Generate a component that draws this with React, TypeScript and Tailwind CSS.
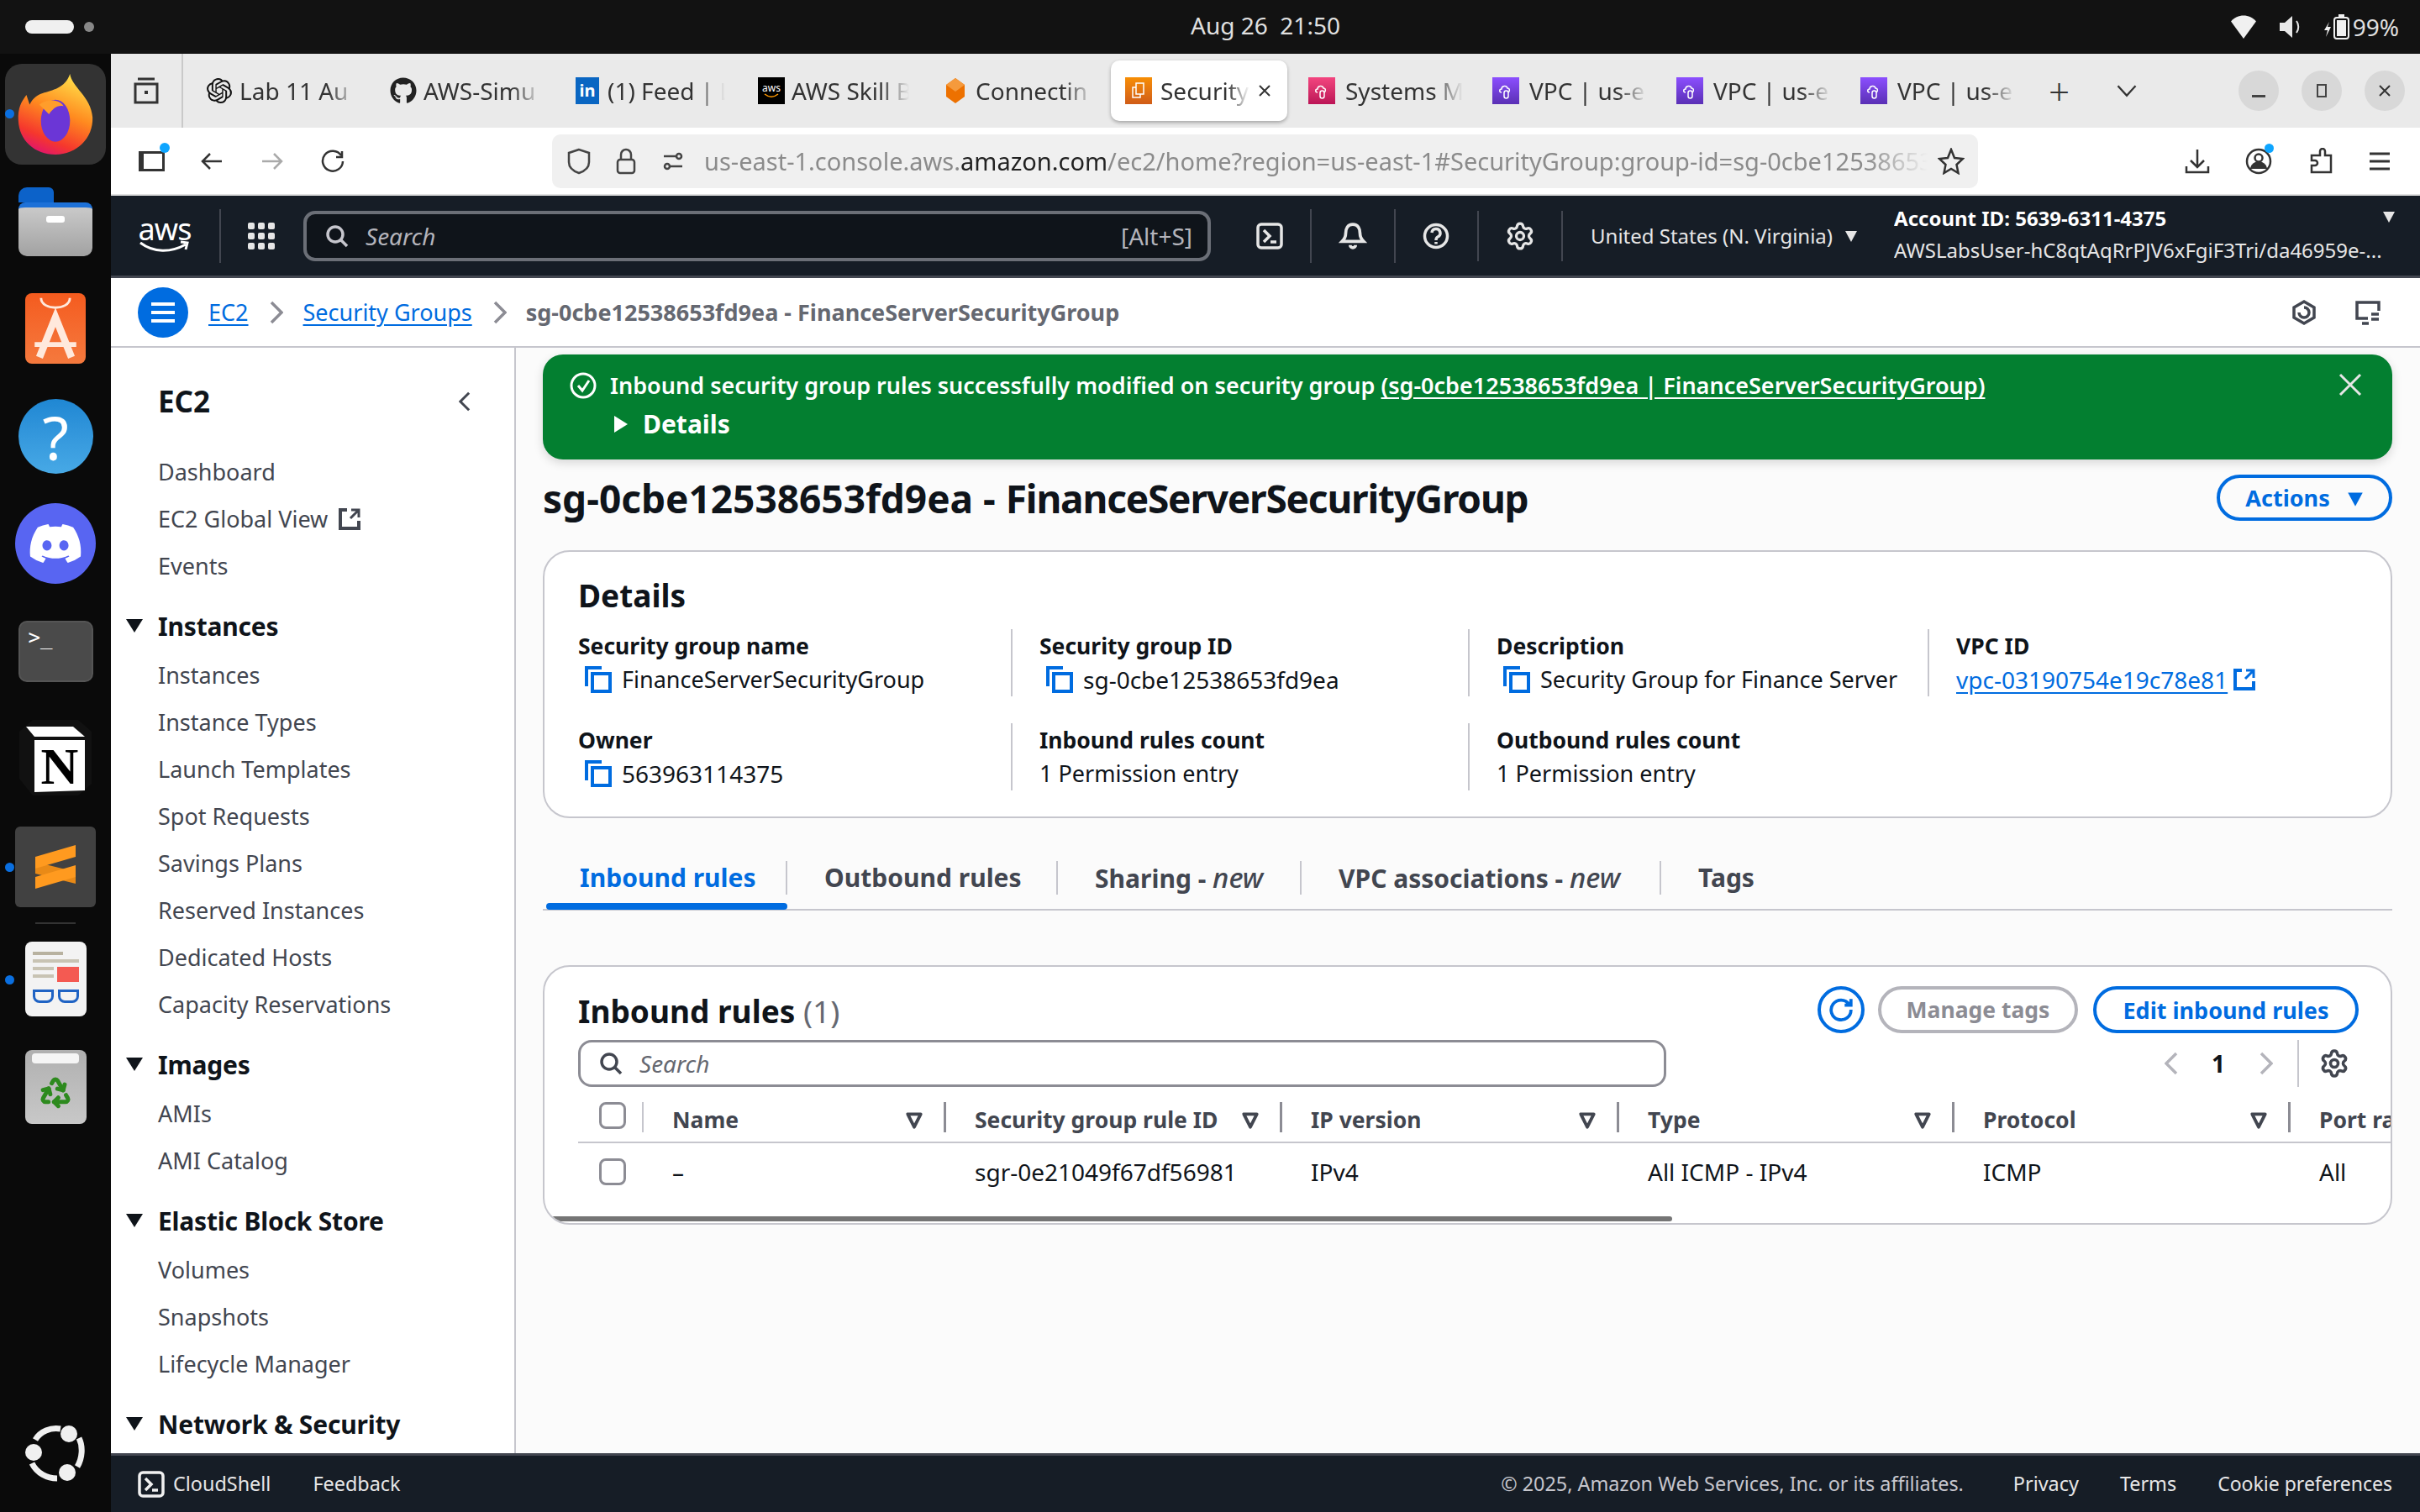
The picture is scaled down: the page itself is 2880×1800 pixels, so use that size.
import { FaDiscord, FaGithub } from "react-icons/fa";
import { SiOpenai } from "react-icons/si";
import { Recycle, Settings } from "lucide-react";

const tabsFade = "overflow-hidden whitespace-nowrap [mask-image:linear-gradient(to_right,black_75%,transparent)]";

const CloudIcon = ({ from }: { from: string }) => (
  <div className={`flex h-[32px] w-[32px] items-center justify-center ${from}`}>
    <svg viewBox="0 0 24 24" className="h-[24px] w-[24px]" fill="none" stroke="white" strokeWidth="1.5">
      <path d="M7 14c-3 0-3-4 0-4 0-4 6-5 7-1 3 0 3 4 1 5" />
      <rect x="10" y="12" width="5" height="9" rx="2.5" />
    </svg>
  </div>
);

const browserTabs = [
  { title: "Lab 11 Au", icon: <SiOpenai className="h-[30px] w-[30px] text-[#111]" /> },
  { title: "AWS-Simu", icon: <FaGithub className="h-[32px] w-[32px] text-[#222]" /> },
  {
    title: "(1) Feed | L",
    icon: (
      <div className="flex h-[32px] w-[28px] items-center justify-center bg-[#0a66c2] text-[20px] font-bold leading-none text-white">
        in
      </div>
    ),
  },
  {
    title: "AWS Skill B",
    icon: (
      <div className="flex h-[32px] w-[32px] flex-col items-center justify-center bg-black text-[12px] leading-none text-white">
        aws
        <svg viewBox="0 0 20 6" className="w-[20px]" fill="none" stroke="#f90" strokeWidth="1.5">
          <path d="M2 1c5 4 11 4 16 0" />
        </svg>
      </div>
    ),
  },
  {
    title: "Connectin",
    icon: (
      <svg viewBox="0 0 32 32" className="h-[32px] w-[32px]">
        <path d="M16 1 27 9v14L16 31 5 23V9z" fill="#ed7100" />
        <path d="M16 1 27 9 16 17 5 9z" fill="#f59a3c" />
      </svg>
    ),
  },
];

const rightTabs = [
  { title: "Systems M", bg: "bg-gradient-to-b from-[#f3457f] to-[#bc1356]" },
  { title: "VPC | us-e", bg: "bg-gradient-to-b from-[#8c4fff] to-[#5a30b5]" },
  { title: "VPC | us-e", bg: "bg-gradient-to-b from-[#8c4fff] to-[#5a30b5]" },
  { title: "VPC | us-e", bg: "bg-gradient-to-b from-[#8c4fff] to-[#5a30b5]" },
];

const navSections = [
  { title: "Instances", items: ["Instances", "Instance Types", "Launch Templates", "Spot Requests", "Savings Plans", "Reserved Instances", "Dedicated Hosts", "Capacity Reservations"] },
  { title: "Images", items: ["AMIs", "AMI Catalog"] },
  { title: "Elastic Block Store", items: ["Volumes", "Snapshots", "Lifecycle Manager"] },
  { title: "Network & Security", items: [] },
];

const columns = [
  { label: "Name", value: "–", width: "w-[360px]" },
  { label: "Security group rule ID", value: "sgr-0e21049f67df56981", width: "w-[400px]" },
  { label: "IP version", value: "IPv4", width: "w-[401px]" },
  { label: "Type", value: "All ICMP - IPv4", width: "w-[399px]" },
  { label: "Protocol", value: "ICMP", width: "w-[400px]" },
  { label: "Port range", value: "All", width: "w-[400px]" },
];

const CopyIcon = () => (
  <svg viewBox="0 0 32 32" className="ml-[8px] mr-[12px] h-[32px] w-[32px] shrink-0" fill="none" stroke="#006ce0" strokeWidth="4">
    <path d="M2 24V2h18" />
    <rect x="9" y="9" width="21" height="21" />
  </svg>
);

const ExternalIcon = ({ color, size }: { color: string; size: string }) => (
  <svg viewBox="0 0 28 28" className={size} fill="none" stroke={color} strokeWidth="4">
    <path d="M11 3H3v22h22v-9" />
    <path d="M15 13 24 4M16 3h9v9" strokeWidth="3" />
  </svg>
);

const Shell = ({ size, color }: { size: string; color: string }) => (
  <svg viewBox="0 0 32 32" className={size} fill="none" stroke={color} strokeWidth="3.5">
    <rect x="2" y="2" width="28" height="28" rx="4" />
    <path d="M9 9l7 7-7 7M17 23h7" />
  </svg>
);

const Caret = ({ color, size }: { color: string; size: string }) => (
  <svg viewBox="0 0 16 16" className={size} fill={color}>
    <path d="M1 2h14L8 15z" />
  </svg>
);

const SortIcon = () => (
  <svg viewBox="0 0 20 20" className="h-[22px] w-[22px]" fill="none" stroke="#424650" strokeWidth="3.5" strokeLinejoin="round">
    <path d="M3 3h14L10 17z" />
  </svg>
);

const Dot = ({ top }: { top: string }) => <div className={`absolute left-[6px] h-[11px] w-[11px] rounded-full bg-[#0a6fe0] ${top}`} />;

function Dock() {
  return (
    <aside className="relative flex w-[132px] shrink-0 flex-col items-center bg-[#0a0a0a]">
      <Dot top="top-[66px]" />
      <Dot top="top-[963px]" />
      <Dot top="top-[1097px]" />
      <div className="mt-[12px] flex h-[120px] w-[120px] items-center justify-center rounded-[20px] bg-[#333]">
        <svg viewBox="0 0 100 100" className="h-[96px] w-[96px]">
          <defs>
            <linearGradient id="ff" x1="0.7" y1="0" x2="0.3" y2="1">
              <stop offset="0" stopColor="#ffe14a" />
              <stop offset="0.45" stopColor="#ff8a1f" />
              <stop offset="0.8" stopColor="#f5372d" />
              <stop offset="1" stopColor="#e0136f" />
            </linearGradient>
          </defs>
          <path d="M68 0c2 16 26 28 28 54 1 26-20 46-46 46S5 82 4 58C3 42 8 34 14 26l4 12c4-8 10-12 16-14 12-4 28-6 34-24z" fill="url(#ff)" />
          <ellipse cx="50" cy="58" rx="18" ry="26" fill="#6b36d6" />
          <path d="M30 38c10-8 26-6 30 2-8-2-14 4-18 10z" fill="#ff9d2b" />
        </svg>
      </div>
      <div className="mt-[27px] flex h-[82px] w-[88px] flex-col overflow-hidden rounded-[10px]">
        <div className="h-[18px] w-[42px] rounded-t-[6px] bg-[#0c62c9]" />
        <div className="flex flex-1 justify-center rounded-[8px] border-t-[6px] border-[#1d71d8] bg-gradient-to-b from-[#c9c9c9] to-[#a2a2a2] pt-[10px]">
          <div className="h-[8px] w-[22px] rounded-[3px] bg-white" />
        </div>
      </div>
      <div className="mt-[44px] flex h-[84px] w-[72px] flex-col items-center rounded-[8px] bg-gradient-to-b from-[#f45b1e] to-[#f5793d] pt-[2px]">
        <svg viewBox="0 0 72 84" className="h-[80px] w-[72px]" fill="none" stroke="#ffe9dc" strokeWidth="9">
          <path d="M18 4c0 16 36 16 36 0" strokeWidth="3" />
          <path d="M16 78 36 28l20 50" />
          <path d="M10 62h52" strokeWidth="6" />
        </svg>
      </div>
      <div className="mt-[42px] flex h-[89px] w-[89px] items-center justify-center rounded-full bg-gradient-to-b from-[#1f87d3] to-[#47a9e6] text-[72px] leading-none text-white [font-family:'Noto_Sans',sans-serif]">
        ?
      </div>
      <div className="mt-[35px] flex h-[96px] w-[96px] items-center justify-center rounded-full bg-[#5865f2]">
        <FaDiscord className="h-[66px] w-[66px] text-white" />
      </div>
      <div className="mt-[44px] h-[73px] w-[89px] rounded-[10px] border-2 border-[#555] bg-[#4a4a4a] pl-[10px] text-[24px] leading-[36px] text-white [font-family:'DejaVu_Sans_Mono',monospace]">
        &gt;_
      </div>
      <svg viewBox="0 0 86 90" className="mt-[45px] h-[90px] w-[86px]">
        <path d="M0 14 16 0h54l16 14v62l-16 14H16L0 70z" fill="#111" />
        <path d="M8 8h56l14 12H18z" fill="#fff" />
        <path d="M18 24h60v60l-60 2z" fill="#fff" />
        <text x="48" y="76" textAnchor="middle" fontSize="62" fontWeight="700" fontFamily="Liberation Serif" fill="#000">
          N
        </text>
      </svg>
      <div className="mt-[37px] flex h-[96px] w-[96px] items-center justify-center rounded-[6px] bg-[#414141]">
        <svg viewBox="0 0 48 52" className="h-[62px] w-[48px]" fill="#ff9a1f">
          <path d="M0 20 48 32v14L0 34z" fill="#e98a17" />
          <path d="M0 14 48 0v14L0 28z" />
          <path d="M0 38l48-14v14L0 52z" />
        </svg>
      </div>
      <div className="mt-[18px] h-[2px] w-[48px] bg-[#333]" />
      <div className="mt-[21px] flex h-[89px] w-[73px] flex-col gap-[5px] rounded-[8px] bg-[#f3f3f3] px-[9px] pt-[12px]">
        <div className="h-[4px] w-[36px] bg-[#b8b2a0]" />
        <div className="h-[4px] w-full bg-[#c8c3b3]" />
        <div className="flex gap-[4px]">
          <div className="flex flex-1 flex-col gap-[5px]">
            <div className="h-[4px] bg-[#c8c3b3]" />
            <div className="h-[4px] bg-[#c8c3b3]" />
          </div>
          <div className="h-[18px] w-[26px] bg-[#f45a52]" />
        </div>
        <div className="mt-[4px] flex justify-between">
          <div className="h-[16px] w-[25px] rounded-b-[8px] border-[3px] border-[#1f63c4]" />
          <div className="h-[16px] w-[25px] rounded-b-[8px] border-[3px] border-[#1f63c4]" />
        </div>
      </div>
      <div className="mt-[40px] flex h-[88px] w-[73px] flex-col items-center rounded-[8px] bg-gradient-to-b from-[#b0b0b0] to-[#c8c8c8] pt-[4px]">
        <div className="h-[12px] w-[56px] rounded-[4px] bg-[#f5f5f5]" />
        <Recycle className="mt-[14px] h-[40px] w-[40px] text-[#2d8a1e]" strokeWidth={3} />
      </div>
      <div className="mt-[358px]">
        <svg viewBox="0 0 72 68" className="h-[68px] w-[72px]" fill="none" stroke="#f0f0f0" strokeWidth="7">
          <path d="M42 5C30 3 18 8 12 18M8 46c6 12 18 18 30 18M62 50c6-10 7-24 2-34" />
          <circle cx="52" cy="11" r="10" fill="#f0f0f0" stroke="none" />
          <circle cx="10" cy="33" r="10" fill="#f0f0f0" stroke="none" />
          <circle cx="50" cy="57" r="10" fill="#f0f0f0" stroke="none" />
        </svg>
      </div>
    </aside>
  );
}

function TabStrip() {
  return (
    <div className="flex h-[88px] shrink-0 items-center bg-[#eaeaea] text-[28px] text-[#333] [font-family:'Noto_Sans',sans-serif]">
      <div className="flex h-full w-[86px] shrink-0 items-center justify-center border-r-2 border-[#c9c9c9]">
        <svg viewBox="0 0 32 32" className="h-[32px] w-[32px]" fill="none" stroke="#333" strokeWidth="3">
          <path d="M6 2h20M3 8h26v22H3z" />
          <rect x="14" y="16" width="4" height="4" fill="#333" stroke="none" />
        </svg>
      </div>
      <div className="ml-[9px] flex h-full items-center">
        {browserTabs.map((tab) => (
          <div key={tab.title} className="flex w-[219px] items-center gap-[8px] pl-[18px]">
            <div className="flex w-[32px] shrink-0 justify-center">{tab.icon}</div>
            <div className={`w-[140px] ${tabsFade}`}>{tab.title}</div>
          </div>
        ))}
        <div className="flex h-[72px] w-[210px] items-center gap-[10px] rounded-[10px] bg-white pl-[17px] shadow-[0_2px_4px_rgba(0,0,0,0.3)]">
          <div className="flex h-[32px] w-[32px] shrink-0 items-center justify-center bg-gradient-to-b from-[#f78e04] to-[#d05c17]">
            <svg viewBox="0 0 24 24" className="h-[24px] w-[24px]" fill="none" stroke="white" strokeWidth="1.5">
              <rect x="9" y="3" width="9" height="13" />
              <path d="M9 8H5v12h9v-4" />
            </svg>
          </div>
          <div className={`w-[106px] ${tabsFade}`}>Security</div>
          <svg viewBox="0 0 16 16" className="h-[16px] w-[16px]" fill="none" stroke="#333" strokeWidth="2">
            <path d="m2 2 12 12M14 2 2 14" />
          </svg>
        </div>
        <div className="w-[9px]" />
        {rightTabs.map((tab, i) => (
          <div key={i} className="flex w-[219px] items-center gap-[12px] pl-[16px]">
            <CloudIcon from={tab.bg} />
            <div className={`w-[140px] ${tabsFade}`}>{tab.title}</div>
          </div>
        ))}
      </div>
      <span className="ml-[21px] text-[44px] font-light leading-none">+</span>
      <svg viewBox="0 0 24 24" className="ml-[54px] h-[28px] w-[28px]" fill="none" stroke="#333" strokeWidth="2">
        <path d="M3 7l9 10 9-10" />
      </svg>
      <div className="ml-[119px] flex items-center gap-[27px]">
        <div className="flex h-[48px] w-[48px] items-center justify-center rounded-full bg-[#d8d8d8]">
          <div className="mt-[12px] h-[3px] w-[16px] bg-[#444]" />
        </div>
        <div className="flex h-[48px] w-[48px] items-center justify-center rounded-full bg-[#d8d8d8]">
          <div className="h-[16px] w-[12px] border-2 border-[#444]" />
        </div>
        <div className="flex h-[48px] w-[48px] items-center justify-center rounded-full bg-[#d8d8d8]">
          <svg viewBox="0 0 16 16" className="h-[16px] w-[16px]" fill="none" stroke="#333" strokeWidth="2">
            <path d="m2 2 12 12M14 2 2 14" />
          </svg>
        </div>
      </div>
    </div>
  );
}

function Toolbar() {
  return (
    <div className="relative flex h-[81px] shrink-0 items-center border-b-2 border-[#e0e0e0] bg-white [font-family:'Noto_Sans',sans-serif]">
      <div className="relative ml-[33px] h-[24px] w-[31px] border-[3px] border-l-[6px] border-[#333]">
        <div className="absolute -right-[9px] -top-[13px] h-[12px] w-[12px] rounded-full bg-[#0ea5ff]" />
      </div>
      <svg viewBox="0 0 28 28" className="ml-[42px] h-[28px] w-[28px]" fill="none" stroke="#333" strokeWidth="2.5">
        <path d="M26 14H3M12 5l-9 9 9 9" />
      </svg>
      <svg viewBox="0 0 28 28" className="ml-[44px] h-[28px] w-[28px]" fill="none" stroke="#aaa" strokeWidth="2.5">
        <path d="M2 14h23M16 5l9 9-9 9" />
      </svg>
      <svg viewBox="0 0 28 28" className="ml-[44px] h-[28px] w-[28px]" fill="none" stroke="#333" strokeWidth="2.5">
        <path d="M24 7a12 12 0 1 0 2 7M25 2v7h-7" />
      </svg>
      <div className="ml-[247px] flex h-[64px] w-[1697px] items-center rounded-[10px] bg-[#f0f0f0] pl-[18px]">
        <svg viewBox="0 0 28 32" className="h-[32px] w-[28px]" fill="none" stroke="#444" strokeWidth="2.5">
          <path d="M14 2 2 6v11c0 7 6 11 12 13 6-2 12-6 12-13V6z" />
        </svg>
        <svg viewBox="0 0 24 32" className="ml-[30px] h-[32px] w-[24px]" fill="none" stroke="#444" strokeWidth="2.5">
          <path d="M6 14V8a6 6 0 0 1 12 0v6" />
          <rect x="2" y="14" width="20" height="16" rx="3" />
        </svg>
        <svg viewBox="0 0 28 28" className="ml-[30px] h-[28px] w-[28px]" fill="none" stroke="#444" strokeWidth="2.5">
          <circle cx="21" cy="8" r="3" />
          <circle cx="7" cy="20" r="3" />
          <path d="M3 8h14M11 20h14" />
        </svg>
        <div className="ml-[23px] w-[1456px] overflow-hidden whitespace-nowrap text-[29px] text-[#8b8b8b] [mask-image:linear-gradient(to_right,black_95%,transparent)]">
          us-east-1.console.aws.<span className="text-[#222]">amazon.com</span>/ec2/home?region=us-east-1#SecurityGroup:group-id=sg-0cbe12538653fd9ea
        </div>
        <svg viewBox="0 0 32 32" className="ml-[12px] h-[32px] w-[32px]" fill="none" stroke="#333" strokeWidth="2.5">
          <path d="m16 2 4 10 10 1-7.500 7 2 10-8.500-5-8.500 5 2-10L2 13l10-1z" />
        </svg>
      </div>
      <svg viewBox="0 0 32 32" className="ml-[245px] h-[32px] w-[32px]" fill="none" stroke="#333" strokeWidth="2.5">
        <path d="M16 2v21M8 15l8 8 8-8M3 22v7h26v-7" />
      </svg>
      <div className="relative ml-[41px] h-[32px] w-[32px]">
        <svg viewBox="0 0 32 32" className="h-[32px] w-[32px]" fill="none" stroke="#333" strokeWidth="2.5">
          <circle cx="16" cy="16" r="14" />
          <circle cx="16" cy="12" r="4.500" />
          <path d="M7 25c1-10 17-10 18 0" fill="#333" />
        </svg>
        <div className="absolute -right-[2px] -top-[5px] h-[11px] w-[11px] rounded-full bg-[#0ea5ff]" />
      </div>
      <svg viewBox="0 0 32 32" className="ml-[41px] h-[32px] w-[32px]" fill="none" stroke="#333" strokeWidth="2.5">
        <path d="M12 9h4V4a3 3 0 0 1 6 0v5h7v20H6v-8h4a3 3 0 0 0 0-6H6V9z" />
      </svg>
      <svg viewBox="0 0 28 28" className="ml-[41px] h-[28px] w-[28px]" fill="none" stroke="#333" strokeWidth="3">
        <path d="M2 5h24M2 14h24M2 23h24" />
      </svg>
    </div>
  );
}

function AwsHeader() {
  return (
    <header className="flex h-[98px] shrink-0 items-center border-b-[3px] border-[#424650] bg-[#161d26] text-white [font-family:'Noto_Sans',sans-serif]">
      <div className="ml-[33px] flex w-[62px] flex-col items-center">
        <span className="text-[36px] leading-[26px] tracking-tight">aws</span>
        <svg viewBox="0 0 62 16" className="h-[16px] w-[62px]" fill="none" stroke="white" strokeWidth="3">
          <path d="M2 3c16 12 36 12 54 2M50 2l8 1-2 8" />
        </svg>
      </div>
      <div className="ml-[34px] h-[64px] w-[2px] bg-[#424650]" />
      <div className="ml-[32px] grid h-[32px] w-[32px] grid-cols-3 gap-[4px]">
        {Array.from({ length: 9 }).map((_, i) => (
          <div key={i} className="rounded-[2px] bg-[#e6e6e6]" />
        ))}
      </div>
      <div className="ml-[34px] flex h-[60px] w-[1080px] items-center rounded-[14px] border-[4px] border-[#6b6f77] bg-[#0f141a] pl-[22px] pr-[18px]">
        <svg viewBox="0 0 28 28" className="h-[28px] w-[28px]" fill="none" stroke="#c6c6cd" strokeWidth="3.500">
          <circle cx="12" cy="12" r="9" />
          <path d="m18 18 8 8" />
        </svg>
        <span className="ml-[20px] text-[28px] italic text-[#b4b4bb]">Search</span>
        <span className="ml-auto text-[28px] text-[#b4b4bb]">[Alt+S]</span>
      </div>
      <div className="ml-[52px] flex h-[64px] w-[36px] items-center justify-center">
        <Shell size="h-[32px] w-[32px]" color="#e6e6e6" />
      </div>
      <div className="ml-[30px] h-[64px] w-[2px] bg-[#424650]" />
      <svg viewBox="0 0 32 32" className="ml-[32px] h-[34px] w-[34px]" fill="none" stroke="#e6e6e6" strokeWidth="3.5">
        <path d="M16 3c-6 0-8 5-8 10 0 5-2 7-4 9h24c-2-2-4-4-4-9 0-5-2-10-8-10zM13 26a3 3 0 0 0 6 0" />
      </svg>
      <div className="ml-[32px] h-[64px] w-[2px] bg-[#424650]" />
      <svg viewBox="0 0 32 32" className="ml-[32px] h-[32px] w-[32px]" fill="none" stroke="#e6e6e6" strokeWidth="3.5">
        <circle cx="16" cy="16" r="13.500" />
        <path d="M11 12a5 5 0 1 1 7 5c-2 1-2 2-2 4M16 23v2.500" />
      </svg>
      <div className="ml-[33px] h-[60px] w-[2px] bg-[#424650]" />
      <Settings className="ml-[31px] h-[36px] w-[36px] text-[#e6e6e6]" strokeWidth={2.2} />
      <div className="ml-[31px] h-[60px] w-[2px] bg-[#424650]" />
      <span className="ml-[33px] text-[24px] text-[#e6e6e6]">United States (N. Virginia)</span>
      <Caret color="#e6e6e6" size="ml-[14px] h-[16px] w-[16px]" />
      <div className="ml-[43px] -mt-[4px] w-[605px] overflow-hidden">
        <div className="relative whitespace-nowrap text-[24px] font-bold leading-[38px]">
          Account ID: 5639-6311-4375
          <Caret color="#e6e6e6" size="absolute right-[8px] top-[9px] h-[16px] w-[16px]" />
        </div>
        <div className="whitespace-nowrap text-[24px] leading-[38px] text-[#e6e6e6]">AWSLabsUser-hC8qtAqRrPJV6xFgiF3Tri/da46959e-...</div>
      </div>
    </header>
  );
}

function Breadcrumbs() {
  const sep = (
    <svg viewBox="0 0 16 28" className="h-[28px] w-[16px]" fill="none" stroke="#8c8c94" strokeWidth="3.5">
      <path d="m2 2 12 12L2 26" />
    </svg>
  );
  return (
    <div className="flex h-[83px] shrink-0 items-center border-b-2 border-[#c6c6cd] bg-white text-[27px] [font-family:'Noto_Sans',sans-serif]">
      <div className="ml-[32px] flex h-[60px] w-[60px] flex-col items-center justify-center gap-[6px] rounded-full bg-[#006ce0]">
        <div className="h-[4px] w-[28px] bg-white" />
        <div className="h-[4px] w-[28px] bg-white" />
        <div className="h-[4px] w-[28px] bg-white" />
      </div>
      <a className="ml-[24px] pt-[2px] text-[#006ce0] underline underline-offset-4">EC2</a>
      <div className="ml-[25px]">{sep}</div>
      <a className="ml-[24px] pt-[2px] text-[#006ce0] underline underline-offset-4">Security Groups</a>
      <div className="ml-[25px]">{sep}</div>
      <span className="ml-[23px] pt-[2px] font-bold text-[#656871]">sg-0cbe12538653fd9ea - FinanceServerSecurityGroup</span>
      <svg viewBox="0 0 32 32" className="ml-auto h-[32px] w-[32px]" fill="none" stroke="#424650" strokeWidth="3.5">
        <path d="M16 3 28 10v12l-12 7-12-7V10z" />
        <path d="M10 16a6 6 0 1 0 6-6" />
      </svg>
      <svg viewBox="0 0 32 32" className="ml-[44px] mr-[46px] h-[32px] w-[32px]" fill="none" stroke="#424650" strokeWidth="3.5">
        <path d="M16 23H3V4h26v10M9 29h8" />
        <path d="M20 18h9M20 24h9" />
      </svg>
    </div>
  );
}

function Sidebar() {
  return (
    <nav className="w-[482px] shrink-0 overflow-hidden border-r-2 border-[#c6c6cd] bg-white pl-[56px] pt-[42px] text-[27px] leading-[40px] text-[#424650]">
      <div className="flex items-center justify-between pr-[52px]">
        <h2 className="text-[35px] font-bold leading-[44px] text-[#0f141a]">EC2</h2>
        <svg viewBox="0 0 16 28" className="h-[24px] w-[14px]" fill="none" stroke="#424650" strokeWidth="3.5">
          <path d="M14 2 2 14l12 12" />
        </svg>
      </div>
      <div className="mt-[42px] flex flex-col gap-[16px]">
        <div>Dashboard</div>
        <div className="flex items-center gap-[12px]">
          EC2 Global View
          <ExternalIcon color="#424650" size="h-[28px] w-[28px]" />
        </div>
        <div>Events</div>
      </div>
      {navSections.map((section) => (
        <div key={section.title} className="mt-[32px]">
          <div className="relative mb-[18px] text-[30px] font-bold tracking-[-0.2px] text-[#0f141a]">
            <svg viewBox="0 0 20 16" className="absolute -left-[38px] top-[11px] h-[16px] w-[20px]" fill="#0f141a">
              <path d="M0 0h20L10 16z" />
            </svg>
            {section.title}
          </div>
          <div className="flex flex-col gap-[16px]">
            {section.items.map((item) => (
              <div key={item}>{item}</div>
            ))}
          </div>
        </div>
      ))}
    </nav>
  );
}

const DetailCell = ({ label, value, digits, copy, link, divider = true }: { label: string; value?: string; digits?: boolean; copy?: boolean; link?: string; divider?: boolean }) => (
  <div className={`h-[80px] pl-[32px] ${divider ? "border-l-2 border-[#c6c6cd]" : ""}`}>
    <div className="text-[26.500px] font-bold leading-[40px] text-[#0f141a]">{label}</div>
    <div className={`flex items-center leading-[40px] text-[#0f141a] ${digits ? "text-[28px]" : "text-[27px]"}`}>
      {copy && <CopyIcon />}
      {value}
      {link && (
        <a className="flex items-center gap-[6px] text-[28px] text-[#006ce0] underline underline-offset-4">
          {link} <ExternalIcon color="#006ce0" size="h-[28px] w-[28px]" />
        </a>
      )}
    </div>
  </div>
);

function DetailsCard() {
  return (
    <section className="mt-[35px] h-[319px] rounded-[32px] border-2 border-[#c6c6cd] bg-white pl-[40px] pt-[28px]">
      <h2 className="text-[37px] font-bold leading-[48px] text-[#0f141a]">Details</h2>
      <div className="mt-[16px] grid grid-cols-[515px_544px_547px_1fr] gap-y-[32px]">
        <div className="-ml-[32px]">
          <DetailCell label="Security group name" value="FinanceServerSecurityGroup" copy divider={false} />
        </div>
        <DetailCell label="Security group ID" value="sg-0cbe12538653fd9ea" digits copy />
        <DetailCell label="Description" value="Security Group for Finance Server" copy />
        <DetailCell label="VPC ID" link="vpc-03190754e19c78e81" />
        <div className="-ml-[32px]">
          <DetailCell label="Owner" value="563963114375" digits copy divider={false} />
        </div>
        <DetailCell label="Inbound rules count" value="1 Permission entry" />
        <DetailCell label="Outbound rules count" value="1 Permission entry" />
      </div>
    </section>
  );
}

function Tabs() {
  const tabs = [
    { label: "Inbound rules", w: "w-[287px]" },
    { label: "Outbound rules", w: "w-[322px]" },
    { label: "Sharing - ", em: "new", w: "w-[290px]" },
    { label: "VPC associations - ", em: "new", w: "w-[428px]" },
    { label: "Tags", w: "w-[120px]" },
  ];
  return (
    <div className="mt-[51px] flex h-[59px] items-start border-b-2 border-[#c6c6cd] pl-[4px] text-[30px] font-bold leading-[40px] text-[#424650]">
      {tabs.map((tab, i) => (
        <div key={tab.label} className={`relative h-[58px] shrink-0 ${tab.w}`}>
          <div className={`h-[40px] whitespace-nowrap ${i === 0 ? "pl-[40px] text-[#006ce0]" : "pl-[44px]"} ${i < 4 ? "border-r-2 border-[#c6c6cd]" : ""}`}>
            {tab.label}
            {tab.em && <em className="text-[33px] font-medium">{tab.em}</em>}
          </div>
          {i === 0 && <div className="absolute bottom-0 left-0 right-0 h-[8px] rounded-[4px] bg-[#006ce0]" />}
        </div>
      ))}
    </div>
  );
}

function RulesCard() {
  return (
    <section className="relative mt-[65px] h-[309px] overflow-hidden rounded-[32px] border-2 border-[#c6c6cd] bg-white pl-[40px]">
      <div className="flex h-[87px] items-start pt-[23px]">
        <h2 className="mt-[6px] text-[37px] font-bold leading-[48px] text-[#0f141a]">
          Inbound rules <span className="font-normal text-[#656871]">(1)</span>
        </h2>
        <div className="ml-auto flex items-center pr-[38px]">
          <div className="flex h-[56px] w-[56px] items-center justify-center rounded-full border-[4px] border-[#006ce0]">
            <svg viewBox="0 0 28 28" className="h-[30px] w-[30px]" fill="none" stroke="#006ce0" strokeWidth="3.500">
              <path d="M23 8a11 11 0 1 0 2 6M25 2v7h-7" />
            </svg>
          </div>
          <div className="ml-[16px] flex h-[56px] w-[238px] items-center justify-center rounded-full border-[4px] border-[#b4b4bb] pt-[2px] text-[26.500px] font-bold text-[#8c8c94]">
            Manage tags
          </div>
          <div className="ml-[18px] flex h-[56px] w-[316px] items-center justify-center rounded-full border-[4px] border-[#006ce0] pt-[2px] text-[27px] font-bold text-[#006ce0]">
            Edit inbound rules
          </div>
        </div>
      </div>
      <div className="flex h-[56px] items-center">
        <div className="flex h-[56px] w-[1295px] items-center rounded-[16px] border-[3px] border-[#8c8c94] pl-[22px]">
          <svg viewBox="0 0 28 28" className="h-[28px] w-[28px]" fill="none" stroke="#424650" strokeWidth="3.500">
            <circle cx="12" cy="12" r="9" />
            <path d="m18 18 8 8" />
          </svg>
          <span className="ml-[20px] text-[28px] italic text-[#656871]">Search</span>
        </div>
        <svg viewBox="0 0 16 28" className="ml-[593px] h-[28px] w-[16px]" fill="none" stroke="#b4b4bb" strokeWidth="3.5">
          <path d="M14 2 2 14l12 12" />
        </svg>
        <span className="ml-[40px] w-[14px] text-[28px] font-bold text-[#0f141a]">1</span>
        <svg viewBox="0 0 16 28" className="ml-[43px] h-[28px] w-[16px]" fill="none" stroke="#b4b4bb" strokeWidth="3.5">
          <path d="m2 2 12 12L2 26" />
        </svg>
        <div className="ml-[29px] h-[56px] w-[2px] bg-[#c6c6cd]" />
        <Settings className="ml-[24px] h-[36px] w-[36px] text-[#424650]" strokeWidth={2.4} />
      </div>
      <div className="mt-[18px] flex h-[49px] w-[2240px] border-b-2 border-[#c6c6cd]">
        <div className="relative h-[36px] w-[78px] shrink-0 pl-[25px]">
          <div className="h-[32px] w-[32px] rounded-[8px] border-[3px] border-[#8c8c94] bg-white" />
          <div className="absolute right-0 top-0 h-[36px] w-[2px] bg-[#c6c6cd]" />
        </div>
        {columns.map((col) => (
          <div key={col.label} className={`relative flex h-[40px] shrink-0 items-center justify-between pl-[34px] pr-[27px] pt-[4px] text-[26.500px] font-bold text-[#424650] ${col.width}`}>
            <span className="whitespace-nowrap">{col.label}</span>
            <SortIcon />
            <div className="absolute right-0 top-0 h-[36px] w-[3px] bg-[#8c8c94]" />
          </div>
        ))}
      </div>
      <div className="flex h-[68px] w-[2240px] items-center">
        <div className="w-[78px] shrink-0 pl-[25px]">
          <div className="h-[32px] w-[32px] rounded-[8px] border-[3px] border-[#8c8c94] bg-white" />
        </div>
        {columns.map((col) => (
          <div key={col.label} className={`shrink-0 pl-[34px] text-[28px] text-[#0f141a] ${col.width}`}>
            {col.value}
          </div>
        ))}
      </div>
      <div className="absolute bottom-[2px] left-[8px] h-[6px] w-[1334px] rounded-[3px] bg-[#757575]" />
    </section>
  );
}

export default function App() {
  return (
    <div className="flex h-screen w-screen flex-col overflow-hidden bg-[#0a0a0a] [font-family:'Noto_Sans',sans-serif]">
      <div className="relative flex h-[64px] shrink-0 items-center justify-center bg-[#121212] pb-[4px] pl-[132px] text-[28px] text-[#e0e0e0]">
        <div className="absolute left-[30px] top-[24px] h-[16px] w-[58px] rounded-full bg-[#f0f0f0]" />
        <div className="absolute left-[100px] top-[26px] h-[12px] w-[12px] rounded-full bg-[#888]" />
        <span className="whitespace-pre">Aug 26  21:50</span>
        <div className="absolute right-[25px] top-[14px] flex items-center">
          <svg viewBox="0 0 32 30" className="h-[28px] w-[32px]" fill="#f0f0f0">
            <path d="M0 8C8-2 24-2 32 8L16 30z" />
          </svg>
          <svg viewBox="0 0 32 32" className="ml-[24px] h-[32px] w-[32px]" fill="#e8e8e8">
            <path d="M3 11h6l9-8v26l-9-8H3z" />
            <path d="M23 9c3 4 3 10 0 14" fill="none" stroke="#e8e8e8" strokeWidth="2" />
          </svg>
          <svg viewBox="0 0 32 32" className="ml-[24px] h-[36px] w-[32px]" fill="#f0f0f0">
            <path d="M6 10 0 20h4l-2 8 6-12H4z" />
            <rect x="12" y="5" width="17" height="25" rx="3" fill="none" stroke="#f0f0f0" strokeWidth="2" />
            <rect x="15" y="8" width="11" height="19" />
            <rect x="17" y="1" width="7" height="4" />
          </svg>
          <span className="ml-[2px] text-[28px] leading-none">99%</span>
        </div>
      </div>
      <div className="flex min-h-0 flex-1">
        <Dock />
        <div className="flex min-w-0 flex-1 flex-col">
          <TabStrip />
          <Toolbar />
          <AwsHeader />
          <Breadcrumbs />
          <div className="flex min-h-0 flex-1 bg-[#fbfbfb]">
            <Sidebar />
            <main className="min-w-0 flex-1 pl-[32px] pr-[33px] pt-[8px]">
              <div className="flex h-[125px] rounded-[24px] bg-[#037f30] pl-[32px] text-white shadow-[0_4px_12px_rgba(0,0,0,0.15)]">
                <div className="flex-1 pt-[17px]">
                  <div className="flex items-center text-[27px] font-semibold leading-[40px]">
                    <svg viewBox="0 0 32 32" className="mr-[16px] h-[32px] w-[32px]" fill="none" stroke="white" strokeWidth="3">
                      <circle cx="16" cy="16" r="14" />
                      <path d="m10 16 5 6 8-12" />
                    </svg>
                    Inbound security group rules successfully modified on security group&nbsp;
                    <a className="underline underline-offset-4">(sg-0cbe12538653fd9ea | FinanceServerSecurityGroup)</a>
                  </div>
                  <div className="ml-[53px] mt-[6px] flex items-center text-[30px] font-bold leading-[40px]">
                    <svg viewBox="0 0 16 20" className="mr-[18px] h-[20px] w-[16px]" fill="white">
                      <path d="M0 0l16 10L0 20z" />
                    </svg>
                    Details
                  </div>
                </div>
                <svg viewBox="0 0 28 28" className="mr-[36px] mt-[22px] h-[28px] w-[28px]" fill="none" stroke="#e6e6e6" strokeWidth="3">
                  <path d="m2 2 24 24M26 2 2 26" />
                </svg>
              </div>
              <div className="mt-[18px] flex h-[55px] items-center justify-between">
                <h1 className="text-[46px] font-bold leading-[56px] text-[#0f141a]">
                  sg-0cbe12538653fd9ea - <span className="tracking-[-1.2px]">FinanceServerSecurityGroup</span>
                </h1>
                <div className="flex h-[55px] w-[209px] items-center justify-center gap-[20px] rounded-full border-[4px] border-[#006ce0] pt-[2px] text-[27px] font-bold text-[#006ce0]">
                  Actions
                  <Caret color="#006ce0" size="h-[20px] w-[20px]" />
                </div>
              </div>
              <DetailsCard />
              <Tabs />
              <RulesCard />
            </main>
          </div>
          <footer className="flex h-[70px] shrink-0 items-center border-t-[3px] border-[#424650] bg-[#161d26] pl-[32px] pr-[33px] text-[23.400px] text-[#e6e6e6]">
            <Shell size="h-[32px] w-[32px]" color="#f0f0f0" />
            <span className="ml-[10px]">CloudShell</span>
            <span className="ml-[50px]">Feedback</span>
            <span className="ml-auto text-[#c6c6cd]">© 2025, Amazon Web Services, Inc. or its affiliates.</span>
            <span className="ml-[59px]">Privacy</span>
            <span className="ml-[49px]">Terms</span>
            <span className="ml-[49px] text-[23px]">Cookie preferences</span>
          </footer>
        </div>
      </div>
    </div>
  );
}
